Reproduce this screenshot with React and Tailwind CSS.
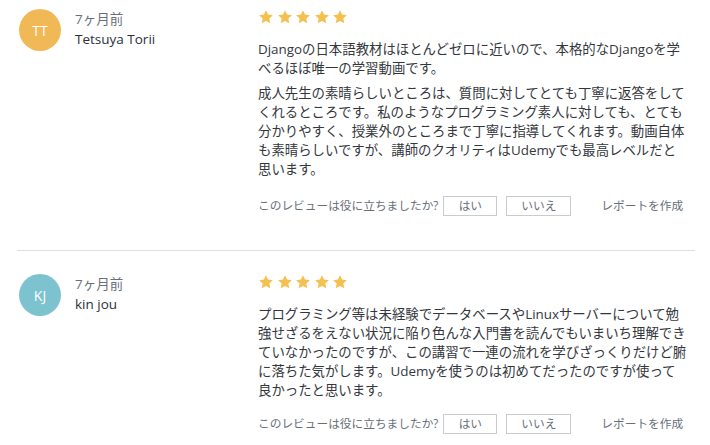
import React from 'react';

const reviews = [
  {
    initials: 'TT',
    color: 'bg-[#f0b955]',
    date: '7ヶ月前',
    name: 'Tetsuya Torii',
    paragraphs: [
      [
        'Djangoの日本語教材はほとんどゼロに近いので、本格的なDjangoを学',
        'べるほぼ唯一の学習動画です。',
      ],
      [
        '成人先生の素晴らしいところは、質問に対してとても丁寧に返答をして',
        'くれるところです。私のようなプログラミング素人に対しても、とても',
        '分かりやすく、授業外のところまで丁寧に指導してくれます。動画自体',
        'も素晴らしいですが、講師のクオリティはUdemyでも最高レベルだと',
        '思います。',
      ],
    ],
  },
  {
    initials: 'KJ',
    color: 'bg-[#7cc3cf]',
    date: '7ヶ月前',
    name: 'kin jou',
    paragraphs: [
      [
        'プログラミング等は未経験でデータベースやLinuxサーバーについて勉',
        '強せざるをえない状況に陥り色んな入門書を読んでもいまいち理解でき',
        'ていなかったのですが、この講習で一連の流れを学びざっくりだけど腑',
        'に落ちた気がします。Udemyを使うのは初めてだったのですが使って',
        '良かったと思います。',
      ],
    ],
  },
];

const Star = () => (
  <svg viewBox="0 0 24 24" className="w-[16px] h-[16px]" fill="#f4c150">
    <path d="M12 1.8l3.1 6.6 7.2.9-5.3 5 1.4 7.1L12 17.9l-6.4 3.5L7 14.3 1.7 9.3l7.2-.9z" />
  </svg>
);

const Review = ({ review, first }) => (
  <div
    className={
      'flex border-b border-[#dedfe0] ' + (first ? 'pt-[9px] pb-[34px]' : 'pt-[23px] pb-[32px]')
    }
  >
    <div className="w-[241px] flex items-start pl-[2px] shrink-0">
      <div
        className={
          'w-[42px] h-[42px] rounded-full flex items-center justify-center text-white text-[14px] ' +
          review.color
        }
      >
        {review.initials}
      </div>
      <div className="ml-[14px] text-[13.5px] leading-[20px]">
        <div className="text-[#686f7a]">{review.date}</div>
        <div className="text-[#29303b]">{review.name}</div>
      </div>
    </div>

    <div className="flex-1">
      <div className="flex gap-[2.5px] mb-[15px]">
        <Star />
        <Star />
        <Star />
        <Star />
        <Star />
      </div>
      {review.paragraphs.map((p, i) => (
        <div key={i} className={'text-[13.4px] leading-[19px] text-[#33373d] ' + (i > 0 ? 'mt-[6px]' : '')}>
          {p.map((line, j) => (
            <div key={j} className="whitespace-nowrap">{line}</div>
          ))}
        </div>
      ))}
      <div
        className={
          'flex items-center text-[11.7px] text-[#686f7a] ' + (first ? 'mt-[17px]' : 'mt-[14px]')
        }
      >
        <span className="whitespace-nowrap">このレビューは役に立ちましたか?</span>
        <button className="ml-[5px] w-[54px] h-[20px] border border-[#cacbcc] text-[#686f7a] flex items-center justify-center">
          はい
        </button>
        <button className="ml-[9px] w-[65px] h-[20px] border border-[#cacbcc] text-[#686f7a] flex items-center justify-center">
          いいえ
        </button>
        <span className="ml-[30px] whitespace-nowrap">レポートを作成</span>
      </div>
    </div>
  </div>
);

export default function App() {
  return (
    <div
      className="w-[710px] h-[445px] overflow-hidden bg-white pl-[17px] pr-[15px]"
      style={{ fontFamily: "'Open Sans', 'Noto Sans CJK JP', sans-serif" }}
    >
      {reviews.map((r, i) => (
        <Review key={i} review={r} first={i === 0} />
      ))}
    </div>
  );
}
